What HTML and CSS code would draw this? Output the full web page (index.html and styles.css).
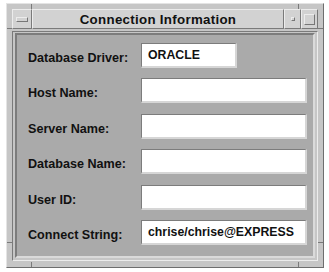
FILE: index.html
```html
<!DOCTYPE html>
<html>
<head>
  <title>Connection Information</title>
  <link rel="stylesheet" href="styles.css">
</head>
<body>
  <div class="window">
    <!-- resize handle notches in the frame -->
    <span class="notch v top-left"></span>
    <span class="notch v top-right"></span>
    <span class="notch v bottom-left"></span>
    <span class="notch v bottom-right"></span>
    <span class="notch h left-top"></span>
    <span class="notch h right-top"></span>
    <span class="notch h left-bottom"></span>
    <span class="notch h right-bottom"></span>

    <div class="titlebar">
      <div class="tbtn menu-btn"><span class="bar"></span></div>
      <div class="title">Connection Information</div>
      <div class="tbtn min-btn"><span class="dot"></span></div>
      <div class="tbtn max-btn"><span class="box"></span></div>
    </div>
    <div class="client">
      <div class="panel">
        <div class="row">
          <label>Database Driver:</label>
          <div class="field short">ORACLE</div>
        </div>
        <div class="row">
          <label>Host Name:</label>
          <div class="field"></div>
        </div>
        <div class="row">
          <label>Server Name:</label>
          <div class="field"></div>
        </div>
        <div class="row">
          <label>Database Name:</label>
          <div class="field"></div>
        </div>
        <div class="row">
          <label>User ID:</label>
          <div class="field"></div>
        </div>
        <div class="row">
          <label>Connect String:</label>
          <div class="field">chrise/chrise@EXPRESS</div>
        </div>
      </div>
    </div>
  </div>
</body>
</html>
```

FILE: styles.css
```css
body {
  margin: 0;
  background-color: #ffffff;
  font-family: 'Liberation Sans', Arial, sans-serif;
}

.window {
  position: relative;
  margin: 3px 0 0 6px;
  width: 318px;
  height: 265px;
  box-sizing: border-box;
  background-color: #c6c6c6;
  border: 1px solid;
  border-color: #e4e4e4 #6e6e6e #6e6e6e #e4e4e4;
  padding: 5px;
}

/* Frame notches */
.notch {
  position: absolute;
  background-color: #7a7a7a;
}

.notch.v {
  width: 1px;
  height: 5px;
}

.notch.h {
  width: 5px;
  height: 1px;
}

.top-left { left: 24px; top: 0; }
.top-right { right: 24px; top: 0; }
.bottom-left { left: 24px; bottom: 0; }
.bottom-right { right: 24px; bottom: 0; }
.left-top { left: 0; top: 24px; }
.right-top { right: 0; top: 24px; }
.left-bottom { left: 0; bottom: 24px; }
.right-bottom { right: 0; bottom: 24px; }

.titlebar {
  display: flex;
  height: 20px;
}

.tbtn, .title {
  box-sizing: border-box;
  border: 1px solid;
  border-color: #ececec #7a7a7a #7a7a7a #ececec;
  background-color: #d2d2d2;
  display: flex;
  align-items: center;
  justify-content: center;
}

.menu-btn {
  width: 20px;
}

.menu-btn .bar {
  width: 10px;
  height: 3px;
  border: 1px solid;
  border-color: #ececec #777 #777 #ececec;
}

.title {
  flex: 1;
  font-size: 13.3px;
  font-weight: bold;
  color: #111;
  letter-spacing: 0.3px;
}

.min-btn {
  width: 17px;
}

.min-btn .dot {
  width: 2px;
  height: 2px;
  border: 1px solid;
  border-color: #ececec #777 #777 #ececec;
}

.max-btn {
  width: 17px;
}

.max-btn .box {
  width: 9px;
  height: 9px;
  border: 1px solid;
  border-color: #ececec #777 #777 #ececec;
}

.client {
  margin-top: 2px;
  height: 230px;
  box-sizing: border-box;
  border: 1px solid;
  border-color: #7a7a7a #ececec #ececec #7a7a7a;
  padding: 1px 2px 2px 2px;
}

.panel {
  height: 100%;
  box-sizing: border-box;
  background-color: #aaaaaa;
  border: 2px solid;
  border-color: #7c7c7c #dadada #dadada #7c7c7c;
  padding: 8px 0 0 11px;
  display: flex;
  flex-direction: column;
  gap: 10.4px;
}

.row {
  display: flex;
  align-items: center;
  height: 25px;
}

.row label {
  width: 113px;
  padding-top: 5px;
  font-size: 12.6px;
  font-weight: bold;
  color: #111;
}

.field {
  width: 166px;
  height: 25px;
  box-sizing: border-box;
  background-color: #ffffff;
  border: 2px solid;
  border-color: #7c7c7c #d6d6d6 #d6d6d6 #7c7c7c;
  border-top-width: 1px;
  border-left-width: 1px;
  padding-left: 6px;
  font-size: 12.3px;
  font-weight: bold;
  color: #111;
  display: flex;
  align-items: center;
}

.field.short {
  width: 96px;
}
```
